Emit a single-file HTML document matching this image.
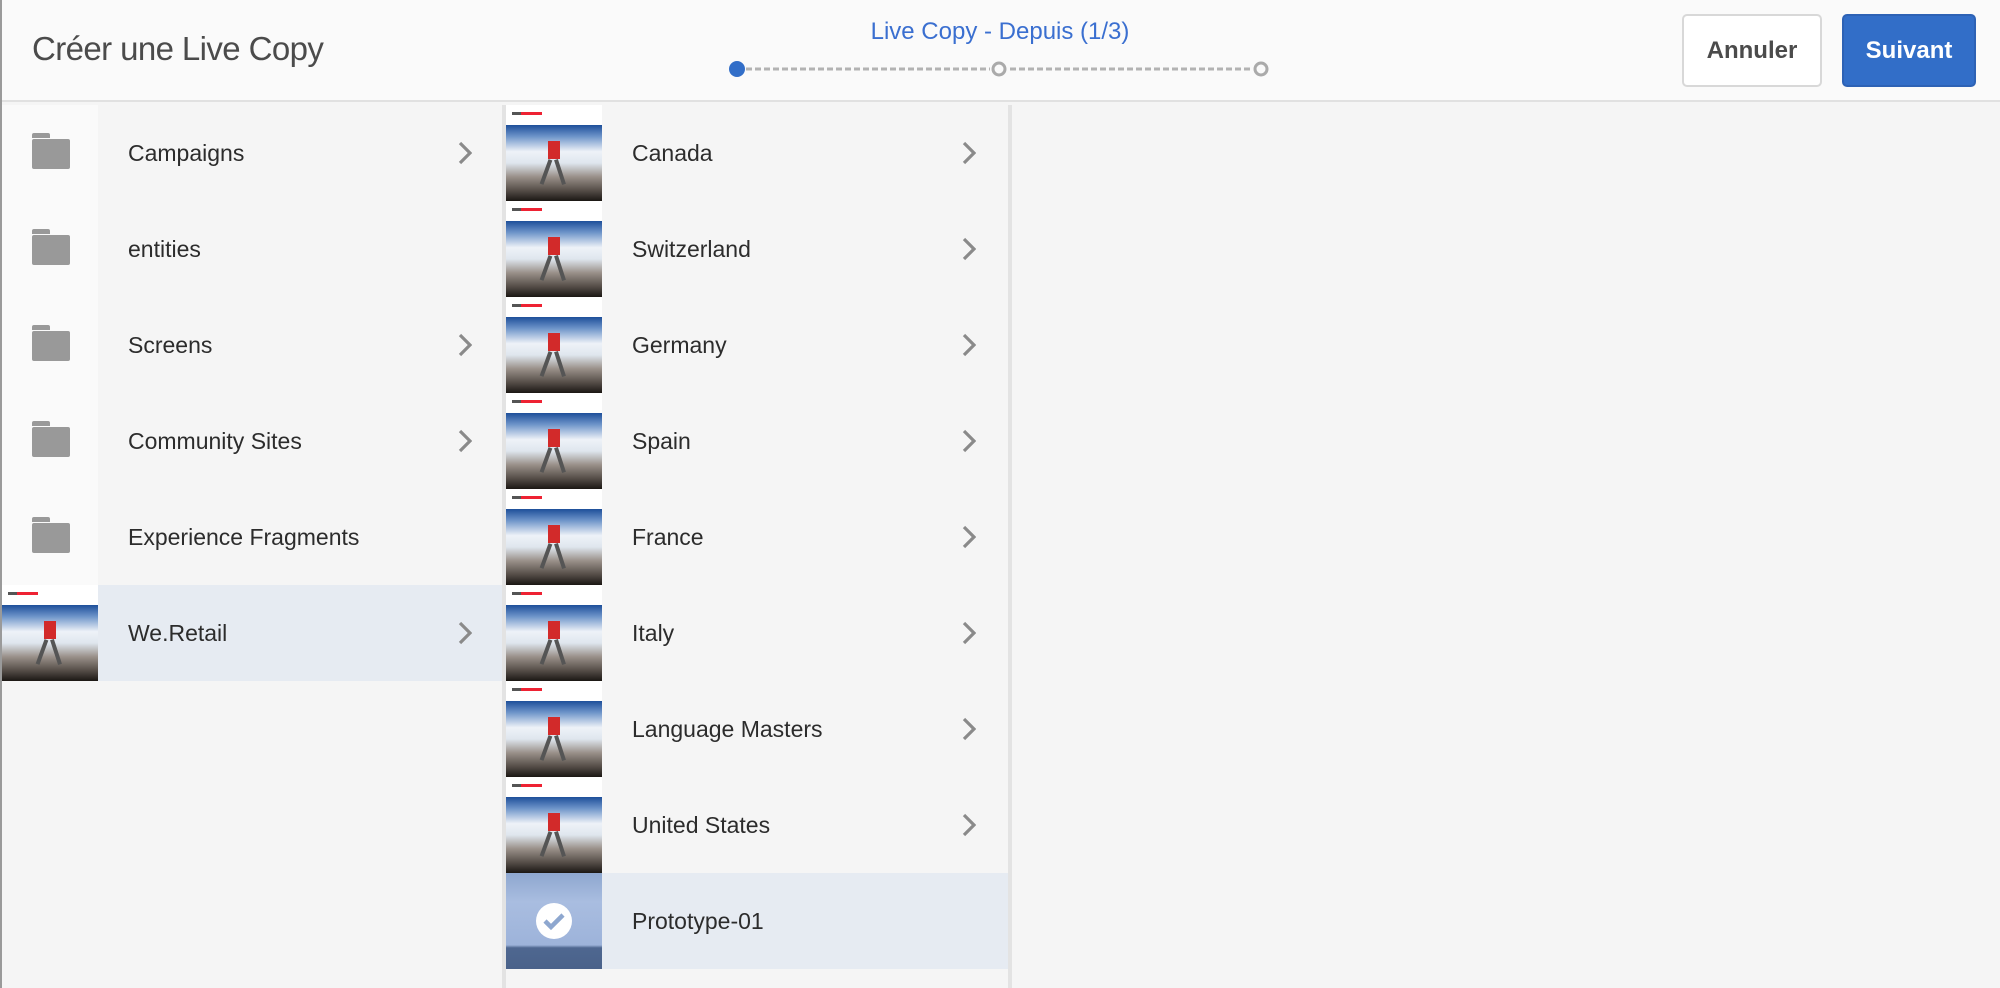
<!DOCTYPE html>
<html><head><meta charset="utf-8"><style>
*{margin:0;padding:0;box-sizing:border-box}
body{width:2000px;height:988px;overflow:hidden;background:#f5f5f5;font-family:"Liberation Sans",sans-serif;position:relative}
.hdr{position:absolute;left:0;top:0;width:2000px;height:102px;background:#fafafa;border-bottom:2px solid #e1e1e1}
.title{position:absolute;left:32px;top:30px;font-size:33px;color:#4b4b4b;letter-spacing:-0.6px}
.step{position:absolute;left:0;width:2000px;top:18px;text-align:center;font-size:24px;color:#3a6fd0}
.btn{position:absolute;top:14px;height:73px;border-radius:5px;font-weight:bold;font-size:24px;display:flex;align-items:center;justify-content:center}
.ann{left:1682px;width:140px;background:#fff;border:2px solid #d8d8d8;color:#4b4b4b}
.suv{left:1842px;width:134px;background:#326ec8;color:#fff;border:2px solid #2d62b5}
.col{position:absolute;top:105px;bottom:0;border-right:4px solid #e3e3e3}
.row{position:absolute;left:0;width:100%;height:96px}
.row .lbl{position:absolute;top:0;line-height:96px;font-size:23px;color:#2c2c2c}
.row.sel{background:#e6ebf2}
.icell{position:absolute;left:2px;top:0;width:96px;height:96px;background:#fafafa}
.fold{position:absolute;left:30px;top:34px;width:38px;height:30px;background:#999;border-radius:2px}
.fold:before{content:"";position:absolute;left:0;top:-6px;width:18px;height:5px;background:#999;border-radius:2px 2px 0 0}
.chev{position:absolute;top:36px;width:14px;height:24px}
.th{position:absolute;top:0;width:96px;height:96px;background:#fff;overflow:hidden}
.th .sky{position:absolute;left:0;top:20px;width:96px;height:76px;background:linear-gradient(180deg,#1e4f9a 0%,#6d94c9 15%,#eef2f8 35%,#dfe6ee 50%,#9a918a 68%,#5a524c 85%,#1b1714 100%)}
.th .p{position:absolute;left:42px;top:36px;width:12px;height:18px;background:#d22a2a}
.th .lg{position:absolute;left:6px;top:7px;width:30px;height:3px;background:linear-gradient(90deg,#555 0 30%,#e23 30%)}
.th .leg{position:absolute;left:38px;top:54px;width:4px;height:26px;background:#555;transform:rotate(20deg)}
.th .leg2{position:absolute;left:52px;top:54px;width:4px;height:26px;background:#555;transform:rotate(-18deg)}
</style></head><body>
<div class="hdr">
<div class="title">Créer une Live Copy</div>
<div class="step">Live Copy - Depuis (1/3)</div>
<svg style="position:absolute;left:720px;top:55px" width="560" height="30">
<line x1="26" y1="14" x2="270" y2="14" stroke="#b3b3b3" stroke-width="3" stroke-dasharray="6,3"/>
<line x1="290" y1="14" x2="532" y2="14" stroke="#b3b3b3" stroke-width="3" stroke-dasharray="6,3"/>
<circle cx="17" cy="14" r="8" fill="#326ec8"/>
<circle cx="279" cy="14" r="6" fill="none" stroke="#aaa" stroke-width="3"/>
<circle cx="541" cy="14" r="6" fill="none" stroke="#aaa" stroke-width="3"/>
</svg>
<div class="btn ann">Annuler</div>
<div class="btn suv">Suivant</div>
</div>
<div style="position:absolute;left:0;top:0;width:2px;height:988px;background:#9a9a9a"></div>

<div class="col" style="left:0;width:506px">
<div class="row" style="top:0"><div class="icell"><div class="fold"></div></div><div class="lbl" style="left:128px">Campaigns</div><svg class="chev" style="left:458px" viewBox="0 0 14 24"><path d="M2 2l10 10-10 10" fill="none" stroke="#8a8a8a" stroke-width="3.2"/></svg></div>
<div class="row" style="top:96px"><div class="icell"><div class="fold"></div></div><div class="lbl" style="left:128px">entities</div></div>
<div class="row" style="top:192px"><div class="icell"><div class="fold"></div></div><div class="lbl" style="left:128px">Screens</div><svg class="chev" style="left:458px" viewBox="0 0 14 24"><path d="M2 2l10 10-10 10" fill="none" stroke="#8a8a8a" stroke-width="3.2"/></svg></div>
<div class="row" style="top:288px"><div class="icell"><div class="fold"></div></div><div class="lbl" style="left:128px">Community Sites</div><svg class="chev" style="left:458px" viewBox="0 0 14 24"><path d="M2 2l10 10-10 10" fill="none" stroke="#8a8a8a" stroke-width="3.2"/></svg></div>
<div class="row" style="top:384px"><div class="icell"><div class="fold"></div></div><div class="lbl" style="left:128px">Experience Fragments</div></div>
<div class="row sel" style="top:480px;left:98px;width:404px"></div>
<div class="row" style="top:480px"><div class="th" style="left:2px"><div class="lg"></div><div class="sky"></div><div class="p"></div><div class="leg"></div><div class="leg2"></div></div><div class="lbl" style="left:128px">We.Retail</div><svg class="chev" style="left:458px" viewBox="0 0 14 24"><path d="M2 2l10 10-10 10" fill="none" stroke="#8a8a8a" stroke-width="3.2"/></svg></div>
</div>

<div class="col" style="left:506px;width:506px">
<div class="row" style="top:0"><div class="th" style="left:0"><div class="lg"></div><div class="sky"></div><div class="p"></div><div class="leg"></div><div class="leg2"></div></div><div class="lbl" style="left:126px">Canada</div><svg class="chev" style="left:456px" viewBox="0 0 14 24"><path d="M2 2l10 10-10 10" fill="none" stroke="#8a8a8a" stroke-width="3.2"/></svg></div>
<div class="row" style="top:96px"><div class="th" style="left:0"><div class="lg"></div><div class="sky"></div><div class="p"></div><div class="leg"></div><div class="leg2"></div></div><div class="lbl" style="left:126px">Switzerland</div><svg class="chev" style="left:456px" viewBox="0 0 14 24"><path d="M2 2l10 10-10 10" fill="none" stroke="#8a8a8a" stroke-width="3.2"/></svg></div>
<div class="row" style="top:192px"><div class="th" style="left:0"><div class="lg"></div><div class="sky"></div><div class="p"></div><div class="leg"></div><div class="leg2"></div></div><div class="lbl" style="left:126px">Germany</div><svg class="chev" style="left:456px" viewBox="0 0 14 24"><path d="M2 2l10 10-10 10" fill="none" stroke="#8a8a8a" stroke-width="3.2"/></svg></div>
<div class="row" style="top:288px"><div class="th" style="left:0"><div class="lg"></div><div class="sky"></div><div class="p"></div><div class="leg"></div><div class="leg2"></div></div><div class="lbl" style="left:126px">Spain</div><svg class="chev" style="left:456px" viewBox="0 0 14 24"><path d="M2 2l10 10-10 10" fill="none" stroke="#8a8a8a" stroke-width="3.2"/></svg></div>
<div class="row" style="top:384px"><div class="th" style="left:0"><div class="lg"></div><div class="sky"></div><div class="p"></div><div class="leg"></div><div class="leg2"></div></div><div class="lbl" style="left:126px">France</div><svg class="chev" style="left:456px" viewBox="0 0 14 24"><path d="M2 2l10 10-10 10" fill="none" stroke="#8a8a8a" stroke-width="3.2"/></svg></div>
<div class="row" style="top:480px"><div class="th" style="left:0"><div class="lg"></div><div class="sky"></div><div class="p"></div><div class="leg"></div><div class="leg2"></div></div><div class="lbl" style="left:126px">Italy</div><svg class="chev" style="left:456px" viewBox="0 0 14 24"><path d="M2 2l10 10-10 10" fill="none" stroke="#8a8a8a" stroke-width="3.2"/></svg></div>
<div class="row" style="top:576px"><div class="th" style="left:0"><div class="lg"></div><div class="sky"></div><div class="p"></div><div class="leg"></div><div class="leg2"></div></div><div class="lbl" style="left:126px">Language Masters</div><svg class="chev" style="left:456px" viewBox="0 0 14 24"><path d="M2 2l10 10-10 10" fill="none" stroke="#8a8a8a" stroke-width="3.2"/></svg></div>
<div class="row" style="top:672px"><div class="th" style="left:0"><div class="lg"></div><div class="sky"></div><div class="p"></div><div class="leg"></div><div class="leg2"></div></div><div class="lbl" style="left:126px">United States</div><svg class="chev" style="left:456px" viewBox="0 0 14 24"><path d="M2 2l10 10-10 10" fill="none" stroke="#8a8a8a" stroke-width="3.2"/></svg></div>
<div class="row sel" style="top:768px">
<div class="th" style="left:0;background:linear-gradient(180deg,#8ea7cf 0%,#a9bde0 30%,#9db3da 75%,#4e6790 78%,#4a628a 100%)"></div>
<svg style="position:absolute;left:29px;top:29px" width="38" height="38" viewBox="0 0 38 38"><circle cx="19" cy="19" r="18" fill="#fff"/><path d="M10 19l6 6 12-12" fill="none" stroke="#8ea7cf" stroke-width="4.5"/></svg>
<div class="lbl" style="left:126px">Prototype-01</div></div>
</div>
</body></html>
